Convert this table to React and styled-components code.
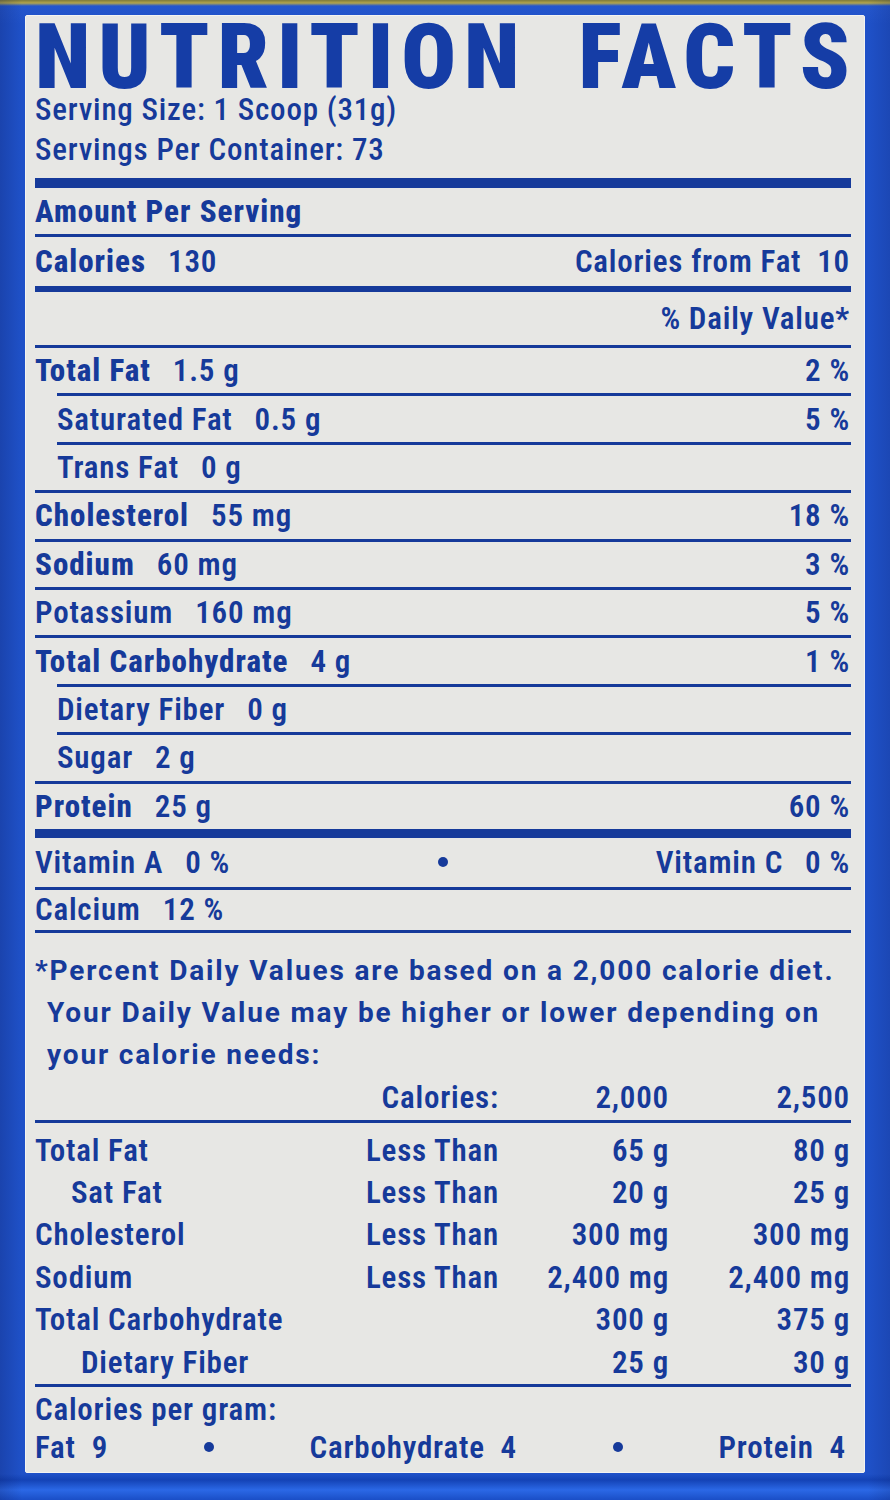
import React from 'react';
import styled, { createGlobalStyle } from 'styled-components';

const BLUE = '#163a9a';

const nutrients = [
  { name: 'Total Fat', amount: '1.5 g', dv: '2 %', bold: true },
  { name: 'Saturated Fat', amount: '0.5 g', dv: '5 %', sub: true },
  { name: 'Trans Fat', amount: '0 g', sub: true },
  { name: 'Cholesterol', amount: '55 mg', dv: '18 %', bold: true },
  { name: 'Sodium', amount: '60 mg', dv: '3 %', bold: true },
  { name: 'Potassium', amount: '160 mg', dv: '5 %' },
  { name: 'Total Carbohydrate', amount: '4 g', dv: '1 %', bold: true },
  { name: 'Dietary Fiber', amount: '0 g', sub: true },
  { name: 'Sugar', amount: '2 g', sub: true },
  { name: 'Protein', amount: '25 g', dv: '60 %', bold: true },
];

const limits = [
  { name: 'Total Fat', note: 'Less Than', a: '65 g', b: '80 g' },
  { name: 'Sat Fat', note: 'Less Than', a: '20 g', b: '25 g', indent: 36 },
  { name: 'Cholesterol', note: 'Less Than', a: '300 mg', b: '300 mg' },
  { name: 'Sodium', note: 'Less Than', a: '2,400 mg', b: '2,400 mg' },
  { name: 'Total Carbohydrate', note: '', a: '300 g', b: '375 g' },
  { name: 'Dietary Fiber', note: '', a: '25 g', b: '30 g', indent: 46 },
];

const GlobalStyle = createGlobalStyle`
  body {
    margin: 0;
    background: #1c4cc2;
  }
`;

const Frame = styled.div`
  box-sizing: border-box;
  min-height: 1500px;
  padding: 15px 25px 27px 25px;
  background:
    linear-gradient(to right, rgba(10, 20, 80, 0.22) 0, rgba(10, 20, 80, 0) 22px, rgba(10, 20, 80, 0) 868px, rgba(10, 20, 80, 0.16) 890px),
    linear-gradient(to bottom, #7d7a3a 0, #b3a54c 3px, #2456cc 6px, #1f51c8 24px, #1f51c8 1474px, #1443b6 1480px, #2b68e6 1490px, #1a4ec6 1500px);
`;

const Panel = styled.div`
  box-sizing: border-box;
  height: 1458px;
  padding: 0 14px 0 9px;
  background: #e7e7e4;
  border: 1px solid #f3f3f1;
  border-radius: 2px;
  display: flex;
  flex-direction: column;
  font-family: Roboto, "Liberation Sans", sans-serif;
  font-stretch: 75%;
  letter-spacing: 0.8px;
  color: ${BLUE};
`;

const Title = styled.h1`
  margin: 0;
  padding-top: 8px;
  font-size: 91px;
  line-height: 66px;
  font-weight: 900;
  letter-spacing: 8px;
  word-spacing: 22px;
  margin-right: -8px;
  white-space: nowrap;
  color: #153da6;
`;

const InfoLine = styled.div`
  font-size: 31px;
  line-height: 40px;
  font-weight: 500;
`;

const Rule = styled.div`
  flex: none;
  height: ${p => p.$size}px;
  margin-top: ${p => p.$gap || 0}px;
  margin-left: ${p => p.$indent || 0}px;
  margin-right: -1px;
  background: ${BLUE};
`;

const Row = styled.div`
  flex: none;
  height: ${p => p.$height}px;
  padding-left: ${p => p.$indent || 0}px;
  display: flex;
  align-items: center;
  justify-content: space-between;
  font-size: 31px;
  white-space: nowrap;
`;

const Label = styled.span`
  font-weight: ${p => (p.$bold ? 800 : 600)};
  letter-spacing: ${p => (p.$bold ? '1px' : '0.8px')};
`;

const Amount = styled.span`
  margin-left: 22px;
  font-weight: 600;
`;

const Value = styled.span`
  font-weight: 600;
`;

const Dot = styled.span`
  width: 10px;
  height: 10px;
  border-radius: 50%;
  background: ${BLUE};
`;

const VitaminRow = styled(Row)`
  display: grid;
  grid-template-columns: 1fr auto 1fr;
  & > :last-child {
    justify-self: end;
  }
`;

const Footnote = styled.p`
  margin: 17px 0 0 0;
  padding-left: 12px;
  text-indent: -12px;
  font-size: 28px;
  line-height: 42px;
  font-weight: 700;
  font-stretch: 100%;
  letter-spacing: 1.85px;
  white-space: nowrap;
`;

const Table = styled.div`
  display: grid;
  grid-template-columns: 1fr 170px 170px 181px;
  font-size: 31px;
  font-weight: 600;
  white-space: nowrap;
`;

const Cell = styled.div`
  height: ${p => p.$height}px;
  display: flex;
  align-items: center;
  justify-content: ${p => (p.$right ? 'flex-end' : 'flex-start')};
  padding-left: ${p => p.$indent || 0}px;
`;

const TableBody = styled(Table)`
  margin-top: 6px;
`;

const PerGram = styled.div`
  margin-top: 4px;
  font-size: 31px;
  font-weight: 600;
  line-height: 38px;
`;

const PerGramRow = styled(Row)`
  padding-right: 4px;
`;

export default function App() {
  return (
    <>
      <GlobalStyle />
      <Frame>
        <Panel>
          <Title>NUTRITION FACTS</Title>
          <InfoLine>Serving Size: 1 Scoop (31g)</InfoLine>
          <InfoLine>Servings Per Container: 73</InfoLine>

          <Rule $size={10} $gap={8} />
          <Row $height={46}>
            <Label $bold>Amount Per Serving</Label>
          </Row>
          <Rule $size={3} />
          <Row $height={49}>
            <span>
              <Label $bold>Calories</Label>
              <Amount>130</Amount>
            </span>
            <Value>Calories from Fat&nbsp;&nbsp;10</Value>
          </Row>
          <Rule $size={6} />
          <Row $height={53}>
            <span />
            <Value>% Daily Value*</Value>
          </Row>

          {nutrients.map(item => (
            <React.Fragment key={item.name}>
              <Rule $size={3} $indent={item.sub ? 22 : 0} />
              <Row $height={45.4} $indent={item.sub ? 22 : 0}>
                <span>
                  <Label $bold={item.bold}>{item.name}</Label>
                  <Amount>{item.amount}</Amount>
                </span>
                <Value>{item.dv || ''}</Value>
              </Row>
            </React.Fragment>
          ))}

          <Rule $size={9} />
          <VitaminRow $height={49}>
            <span>
              <Value>Vitamin A</Value>
              <Amount>0 %</Amount>
            </span>
            <Dot />
            <span>
              <Value>Vitamin C</Value>
              <Amount>0 %</Amount>
            </span>
          </VitaminRow>
          <Rule $size={3} />
          <Row $height={40}>
            <span>
              <Value>Calcium</Value>
              <Amount>12 %</Amount>
            </span>
          </Row>
          <Rule $size={3} />

          <Footnote>
            *Percent Daily Values are based on a 2,000 calorie diet.
            <br />
            Your Daily Value may be higher or lower depending on
            <br />
            your calorie needs:
          </Footnote>

          <Table>
            <Cell $height={44} />
            <Cell $height={44} $right>Calories:</Cell>
            <Cell $height={44} $right>2,000</Cell>
            <Cell $height={44} $right>2,500</Cell>
          </Table>
          <Rule $size={3} />
          <TableBody>
            {limits.map(l => (
              <React.Fragment key={l.name}>
                <Cell $height={42.4} $indent={l.indent}>{l.name}</Cell>
                <Cell $height={42.4} $right>{l.note}</Cell>
                <Cell $height={42.4} $right>{l.a}</Cell>
                <Cell $height={42.4} $right>{l.b}</Cell>
              </React.Fragment>
            ))}
          </TableBody>
          <Rule $size={3} $gap={1} />

          <PerGram>Calories per gram:</PerGram>
          <PerGramRow $height={36}>
            <Value>Fat&nbsp;&nbsp;9</Value>
            <Dot />
            <Value>Carbohydrate&nbsp;&nbsp;4</Value>
            <Dot />
            <Value>Protein&nbsp;&nbsp;4</Value>
          </PerGramRow>
        </Panel>
      </Frame>
    </>
  );
}
